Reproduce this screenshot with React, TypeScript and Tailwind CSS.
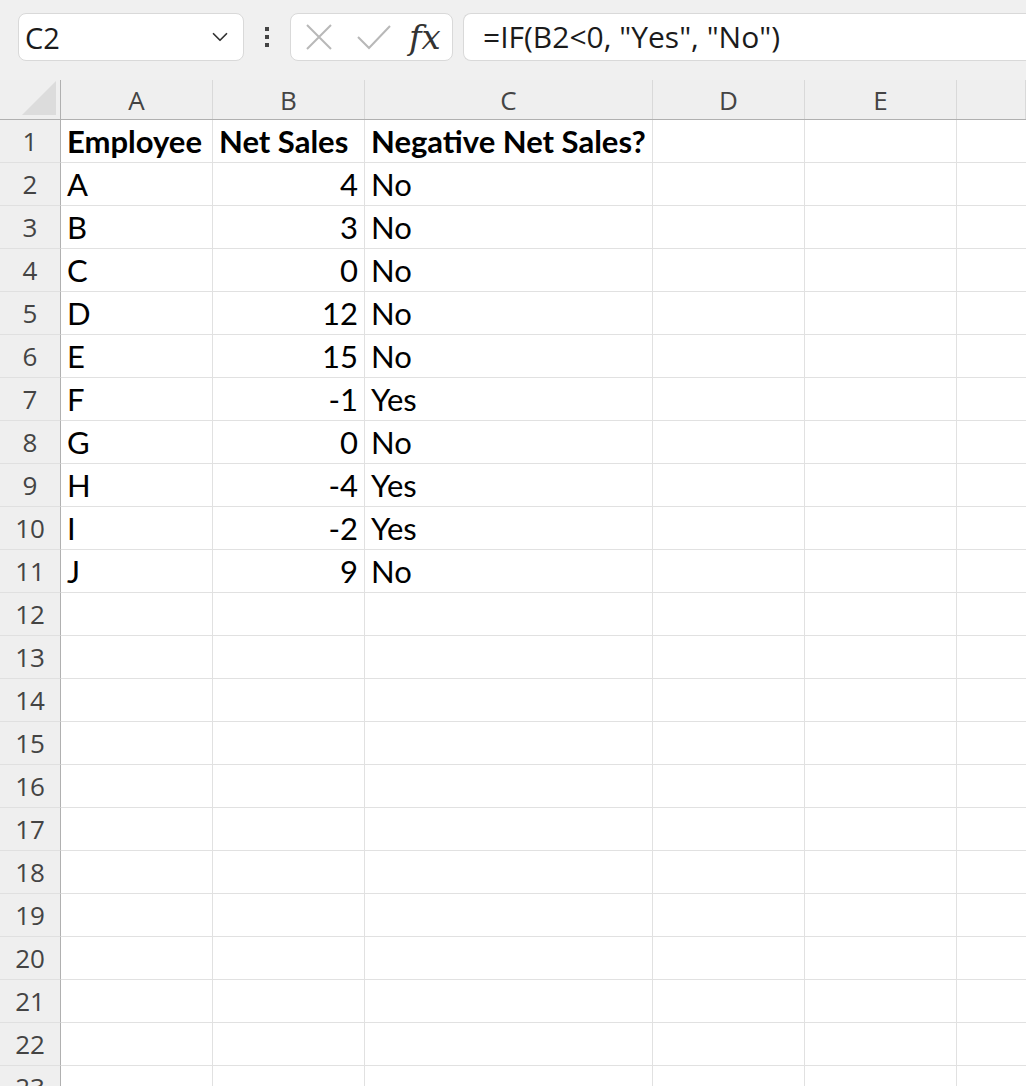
import { ChevronDown } from "lucide-react";

type Row = { emp: string; sales: string; neg: string; bold?: boolean };

const rows: Row[] = [
  { emp: "Employee", sales: "Net Sales", neg: "Negative Net Sales?", bold: true },
  { emp: "A", sales: "4", neg: "No" },
  { emp: "B", sales: "3", neg: "No" },
  { emp: "C", sales: "0", neg: "No" },
  { emp: "D", sales: "12", neg: "No" },
  { emp: "E", sales: "15", neg: "No" },
  { emp: "F", sales: "-1", neg: "Yes" },
  { emp: "G", sales: "0", neg: "No" },
  { emp: "H", sales: "-4", neg: "Yes" },
  { emp: "I", sales: "-2", neg: "Yes" },
  { emp: "J", sales: "9", neg: "No" },
];

const cols = ["A", "B", "C", "D", "E", ""];
const uiFont = "font-['Open_Sans','Noto_Sans',sans-serif]";
const cellFont = "font-['Lato','Liberation_Sans',sans-serif]";
const gridCols = "grid-cols-[61px_152px_152px_288px_152px_152px_1fr]";

function FormulaBar() {
  return (
    <div className={`flex h-[80px] items-start bg-[#f0f0f0] pt-[13px] ${uiFont}`}>
      <div className="ml-[18px] flex h-[48px] w-[226px] items-center justify-between rounded-[8px] border border-[#d9d9d9] bg-white pl-[6px] pr-[10px]">
        <span className="text-[29px] leading-none text-[#1b1b1b]">C2</span>
        <ChevronDown className="h-[26px] w-[26px] text-[#333]" strokeWidth={1.6} />
      </div>
      <div className="flex h-[48px] w-[46px] flex-col items-center justify-center gap-[4px]">
        <span className="h-[4px] w-[4px] bg-[#444]" />
        <span className="h-[4px] w-[4px] bg-[#444]" />
        <span className="h-[4px] w-[4px] bg-[#444]" />
      </div>
      <div className="flex h-[48px] w-[163px] items-center rounded-[8px] border border-[#d9d9d9] bg-white">
        <svg className="ml-[14px] h-[26px] w-[28px]" viewBox="0 0 28 26" fill="none" stroke="#b8b8b8" strokeWidth="2">
          <path d="M2 1L26 25M26 1L2 25" />
        </svg>
        <svg className="ml-[24px] h-[26px] w-[34px]" viewBox="0 0 34 26" fill="none" stroke="#b8b8b8" strokeWidth="2">
          <path d="M1 13L12 24L33 2" />
        </svg>
        <span className="ml-[18px] font-['DejaVu_Serif','Liberation_Serif',serif] text-[34px] italic leading-none text-[#333]">
          fx
        </span>
      </div>
      <div className="ml-[10px] flex h-[48px] flex-1 items-center rounded-l-[8px] border border-r-0 border-[#d9d9d9] bg-white pl-[19px]">
        <span className="text-[30px] leading-none text-[#1b1b1b]">=IF(B2&lt;0, "Yes", "No")</span>
      </div>
    </div>
  );
}

function HeaderRow() {
  return (
    <div className={`grid h-[40px] ${gridCols} border-b border-[#b0b0b0] bg-[#efefef] ${uiFont}`}>
      <div className="relative border-r border-[#b0b0b0]">
        <svg className="absolute bottom-[4px] right-[4px] h-[34px] w-[34px]" viewBox="0 0 34 34">
          <path d="M34 0V34H0Z" fill="#dcdcdc" />
        </svg>
      </div>
      {cols.map((c, i) => (
        <div key={i} className="flex items-center justify-center border-r border-[#d9d9d9] text-[26px] leading-none text-[#444]">
          {c}
        </div>
      ))}
    </div>
  );
}

function SheetRow({ n, row }: { n: number; row?: Row }) {
  const w = row?.bold ? "font-bold" : "";
  const cell = `flex items-center overflow-hidden border-r border-b border-[#e1e1e1] px-[6px] text-[31px] leading-none text-black ${cellFont} ${w}`;
  return (
    <div className={`grid h-[43px] grid-rows-[43px] ${gridCols}`}>
      <div className={`flex items-center justify-center border-r border-b border-r-[#b0b0b0] border-b-[#e0e0e0] bg-[#efefef] text-[26px] leading-none text-[#444] ${uiFont}`}>
        {n}
      </div>
      <div className={cell}>{row?.emp}</div>
      <div className={`${cell} ${row?.bold ? "justify-start" : "justify-end"}`}>{row?.sales}</div>
      <div className={cell}>{row?.neg}</div>
      <div className="border-r border-b border-[#e1e1e1]" />
      <div className="border-r border-b border-[#e1e1e1]" />
      <div className="border-b border-[#e1e1e1]" />
    </div>
  );
}

export default function App() {
  return (
    <div className="h-[1086px] w-[1026px] overflow-hidden bg-white">
      <FormulaBar />
      <HeaderRow />
      {Array.from({ length: 23 }, (_, i) => (
        <SheetRow key={i} n={i + 1} row={rows[i]} />
      ))}
    </div>
  );
}
